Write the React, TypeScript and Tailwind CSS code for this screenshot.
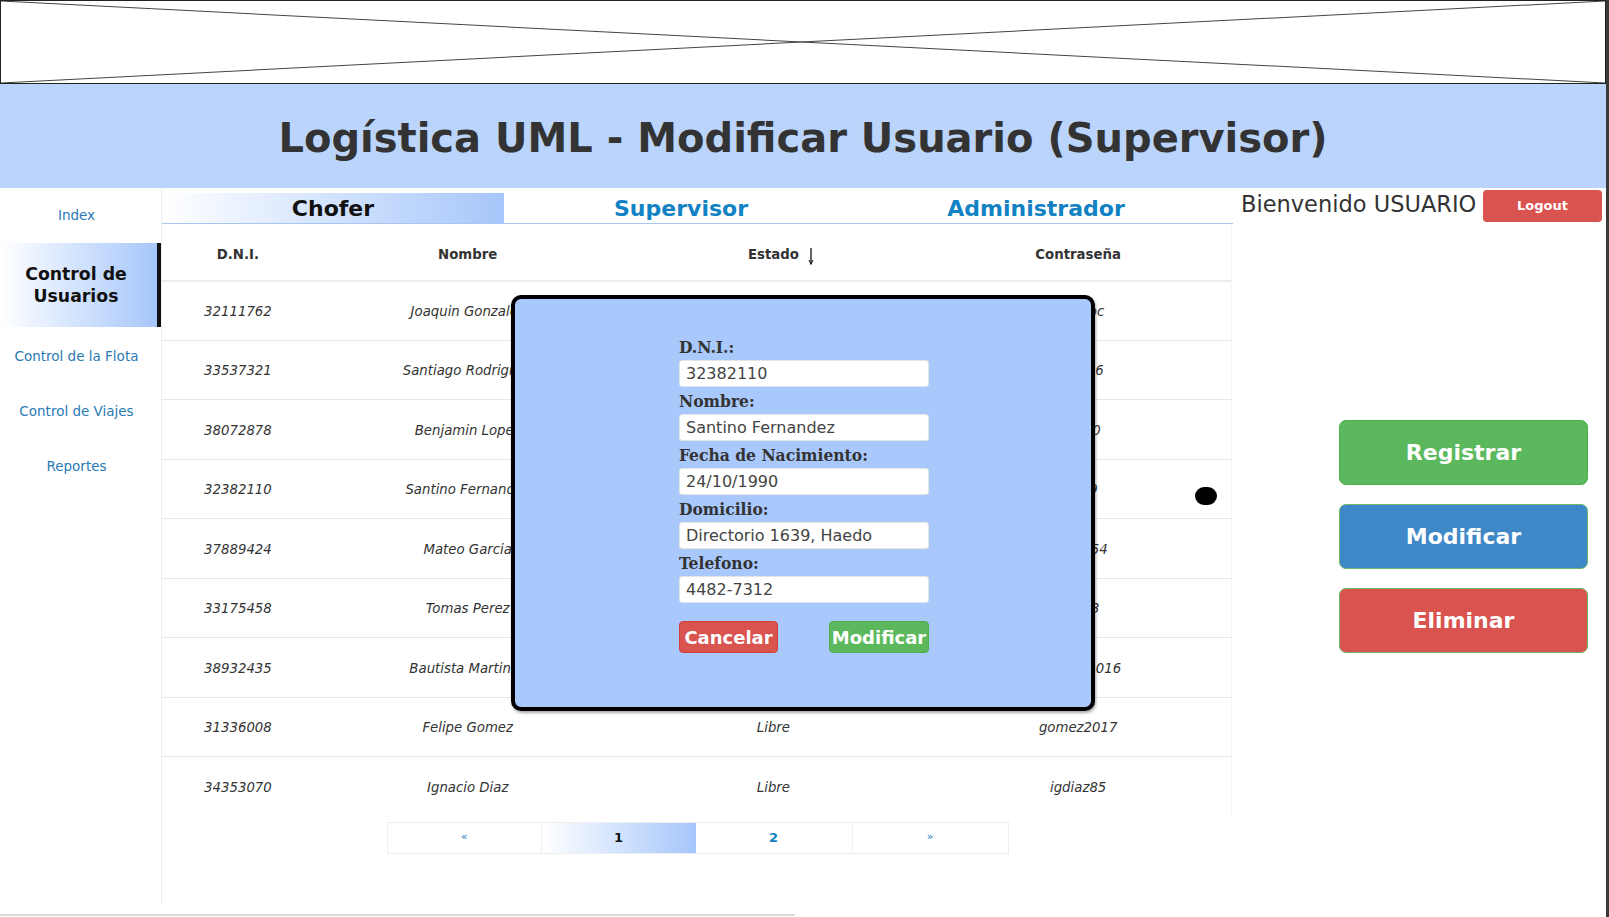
import React from 'react';

type Row = {
  dni: string;
  nombre: string;
  estado: string;
  pass: string;
};

const rows: Row[] = [
  { dni: '32111762', nombre: 'Joaquin Gonzalez', estado: 'Libre', pass: 'joaqgoc' },
  { dni: '33537321', nombre: 'Santiago Rodriguez', estado: 'Libre', pass: 'srodr56' },
  { dni: '38072878', nombre: 'Benjamin Lopez', estado: 'Libre', pass: 'benja0' },
  { dni: '32382110', nombre: 'Santino Fernandez', estado: 'Libre', pass: 'sferr9' },
  { dni: '37889424', nombre: 'Mateo Garcia', estado: 'Libre', pass: 'mgarc54' },
  { dni: '33175458', nombre: 'Tomas Perez', estado: 'Libre', pass: 'tperz3' },
  { dni: '38932435', nombre: 'Bautista Martinez', estado: 'Libre', pass: 'bamarti2016' },
  { dni: '31336008', nombre: 'Felipe Gomez', estado: 'Libre', pass: 'gomez2017' },
  { dni: '34353070', nombre: 'Ignacio Diaz', estado: 'Libre', pass: 'igdiaz85' },
];

const fields = [
  { label: 'D.N.I.:', value: '32382110' },
  { label: 'Nombre:', value: 'Santino Fernandez' },
  { label: 'Fecha de Nacimiento:', value: '24/10/1990' },
  { label: 'Domicilio:', value: 'Directorio 1639, Haedo' },
  { label: 'Telefono:', value: '4482-7312' },
];

const cols = ['w-[152px]', 'w-[308px]', 'w-[304px]', 'w-[306px]'];

const SideLink = ({ label }: { label: string }) => (
  <div className="h-[55px] flex items-center justify-center pr-[8px] text-[13.5px] text-[#2a7ab5]">{label}</div>
);

const App = () => {
  return (
    <div
      className="relative w-[1609px] h-[917px] overflow-hidden bg-white flex text-[#333]"
      style={{ fontFamily: '"DejaVu Sans", Verdana, sans-serif' }}
    >
      <div className="w-[1606px] flex flex-col">
        {/* image placeholder */}
        <div className="h-[84px] border border-[#222] relative">
          <svg className="absolute inset-0 w-full h-full" preserveAspectRatio="none" viewBox="0 0 100 100">
            <line x1="0" y1="0" x2="100" y2="100" stroke="#444" strokeWidth="1" vectorEffect="non-scaling-stroke" />
            <line x1="0" y1="100" x2="100" y2="0" stroke="#444" strokeWidth="1" vectorEffect="non-scaling-stroke" />
          </svg>
        </div>

        {/* title bar */}
        <div className="h-[104px] bg-[#bad4fc] flex items-center justify-center pt-[3px]">
          <h1 className="text-[40px] font-bold text-[#333]">Logística UML - Modificar Usuario (Supervisor)</h1>
        </div>

        <div className="h-[717px] flex">
          {/* sidebar */}
          <div className="w-[162px] border-r border-[#eee] flex flex-col">
            <SideLink label="Index" />
            <div className="h-[84px] border-r-4 border-[#111] bg-gradient-to-r from-white to-[#a6c6fa] flex items-center justify-center pr-[5px] text-center text-[17.3px] leading-[22px] font-bold text-[#111]">
              Control de
              <br />
              Usuarios
            </div>
            <div className="mt-[2px]">
              <SideLink label="Control de la Flota" />
              <SideLink label="Control de Viajes" />
              <SideLink label="Reportes" />
            </div>
          </div>

          {/* center */}
          <div className="w-[1071px] flex flex-col">
            <div className="mt-[5px] h-[31px] flex border-b border-[#a9c6f0] text-[22px] font-bold">
              <div className="w-[342px] bg-gradient-to-r from-white to-[#a6c6fa] flex items-center justify-center text-[#111]">
                Chofer
              </div>
              <div className="w-[354px] flex items-center justify-center text-[#1282c4]">Supervisor</div>
              <div className="w-[356px] flex items-center justify-center text-[#1282c4]">Administrador</div>
            </div>

            <div className="w-[1070px] border-r border-[#f4f4f4]">
              <div className="h-[58px] pt-[6px] flex border-b-2 border-[#ececec] text-[13.3px] font-bold text-[#333]">
                <div className={`${cols[0]} flex items-center justify-center`}>D.N.I.</div>
                <div className={`${cols[1]} flex items-center justify-center`}>Nombre</div>
                <div className={`${cols[2]} flex items-center justify-center`}>
                  <span className="relative">
                    Estado
                    <svg width="6" height="17" viewBox="0 0 6 17" className="absolute left-[calc(100%+9px)] top-[3px]">
                      <line x1="3" y1="0" x2="3" y2="15" stroke="#111" strokeWidth="1.3" />
                      <path d="M1 12 L3 16.5 L5 12" fill="none" stroke="#111" strokeWidth="1" />
                    </svg>
                  </span>
                </div>
                <div className={`${cols[3]} flex items-center justify-center`}>Contraseña</div>
              </div>
              {rows.map((r, i) => (
                <div
                  key={r.dni}
                  className={`${i === 0 ? 'h-[58.5px]' : 'h-[59.5px]'} pt-[3px] flex italic text-[13.3px] text-[#333] ${i < rows.length - 1 ? 'border-b border-[#e8e8e8]' : ''}`}
                >
                  <div className={`${cols[0]} flex items-center justify-center`}>{r.dni}</div>
                  <div className={`${cols[1]} flex items-center justify-center`}>{r.nombre}</div>
                  <div className={`${cols[2]} flex items-center justify-center`}>{r.estado}</div>
                  <div className={`${cols[3]} flex items-center justify-center`}>{r.pass}</div>
                </div>
              ))}
            </div>

            {/* pagination */}
            <div className="mt-[5px] flex justify-center">
              <div className="flex h-[32px] border border-[#eee] text-[13px]">
                <div className="w-[154px] flex items-center justify-center text-[#2a7ab5] text-[11px] border-r border-[#eee]">«</div>
                <div className="w-[154px] flex items-center justify-center font-bold text-[#111] bg-gradient-to-r from-white to-[#a6c6fa]">1</div>
                <div className="w-[157px] flex items-center justify-center font-bold text-[#1282c4] border-r border-[#eee]">2</div>
                <div className="w-[155px] flex items-center justify-center text-[#2a7ab5] text-[11px]">»</div>
              </div>
            </div>
          </div>

          {/* right panel */}
          <div className="flex-1 flex flex-col">
            <div className="flex items-start pl-[8px] pt-[2px]">
              <span className="text-[22.5px] leading-[28px] text-[#333] whitespace-nowrap">Bienvenido USUARIO</span>
              <button className="ml-auto mr-[4px] w-[119px] h-[32px] rounded-[4px] bg-[#d9534f] text-white text-[13px] font-bold">
                Logout
              </button>
            </div>
            <div className="mt-[198px] ml-[106px] w-[249px] flex flex-col gap-[19px]">
              <button className="h-[65px] rounded-[7px] bg-[#5cb85c] border border-[#4cae4c] text-white text-[22px] font-bold">
                Registrar
              </button>
              <button className="h-[65px] rounded-[7px] bg-[#3e88c8] border border-[#6fb56c] text-white text-[22px] font-bold">
                Modificar
              </button>
              <button className="h-[65px] rounded-[7px] bg-[#d9534f] border border-[#6fb56c] text-white text-[22px] font-bold">
                Eliminar
              </button>
            </div>
          </div>
        </div>

        {/* horizontal scrollbar remnant */}
        <div className="mt-[9px] w-[795px] h-[2px] bg-[#dcdcdc]" />
      </div>

      {/* right dark edge */}
      <div className="w-[3px] h-full bg-[#3a3a3a]" />

      {/* black dot */}
      <div className="absolute left-[1195px] top-[487px] w-[22px] h-[18px] rounded-full bg-black" />

      {/* modal */}
      <div className="absolute left-[511px] top-[295px] w-[584px] h-[416px] rounded-[10px] border-4 border-black bg-[#a9c8fb] shadow-[1px_2px_3px_rgba(0,0,0,0.35)] pl-[164px] pt-[38px]">
        <div className="w-[250px] flex flex-col">
          {fields.map((f) => (
            <div key={f.label} className="flex flex-col mb-[4px]">
              <label
                className="h-[20px] leading-[20px] text-[17.3px] font-bold text-[#333] font-stretch-condensed"
                style={{ fontFamily: '"DejaVu Serif", serif' }}
              >
                {f.label}
              </label>
              <div className="mt-[3px] h-[27px] rounded-[3px] bg-white border border-[#e4e4e4] flex items-center pl-[6px] text-[16px] text-[#444]">
                {f.value}
              </div>
            </div>
          ))}
          <div className="mt-[14px] flex justify-between">
            <button className="w-[99px] h-[32px] rounded-[4px] bg-[#d9534f] border border-[#d43f3a] text-white text-[18px] font-bold">
              Cancelar
            </button>
            <button className="w-[100px] h-[32px] rounded-[4px] bg-[#5cb85c] border border-[#4cae4c] text-white text-[18px] font-bold">
              Modificar
            </button>
          </div>
        </div>
      </div>
    </div>
  );
};

export default App;
